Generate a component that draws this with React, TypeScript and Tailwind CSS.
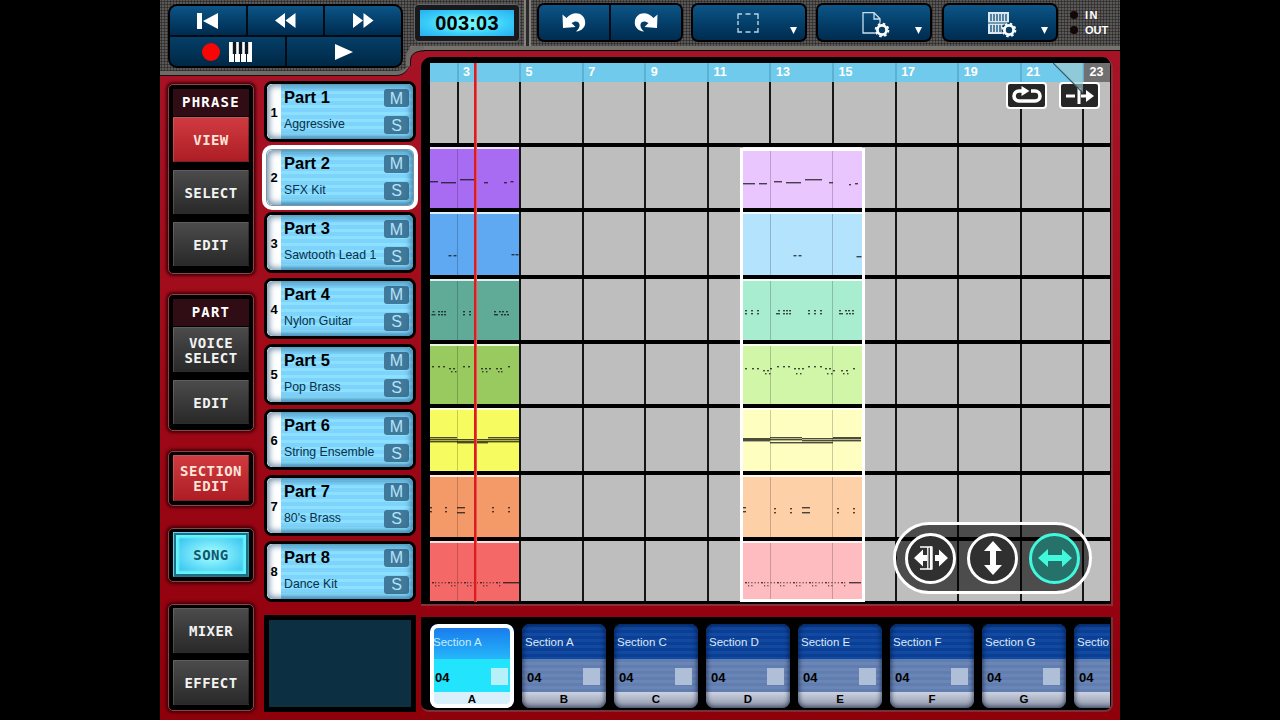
import React from "react";

type Note = [x: number, y: number, w: number, h?: number];

interface Track {
  name: string;
  voice: string;
  height: string;
  left: { color: string; notes: Note[] };
  right: { color: string; notes: Note[] };
}

const dots = (y: number, xs: number[], w = 2): Note[] => xs.map((x) => [x, y, w]);

// hi-hat style pattern used by the drum part
const drumPattern = (length: number, y: number): Note[] =>
  Array.from({ length: Math.floor(length / 3.2) }).flatMap((_, i): Note[] => {
    const x = 2 + i * 3.2;
    return i % 5 === 1 || i % 5 === 2 ? [[x, y, 1], [x, y + 3, 1]] : [[x, y, i % 5 === 0 ? 2 : 1]];
  });

const TRACKS: Track[] = [
  {
    name: "Part 1",
    voice: "Aggressive",
    height: "h-[65px]",
    left: { color: "", notes: [] },
    right: { color: "", notes: [] },
  },
  {
    name: "Part 2",
    voice: "SFX Kit",
    height: "h-[65px]",
    left: {
      color: "bg-[#a86cf2]",
      notes: [[0, 34, 8], [11, 35, 15], [30, 32, 17], [54, 35, 4], [74, 35, 3], [80.5, 34, 3]],
    },
    right: {
      color: "bg-[#eac6fe]",
      notes: [[0, 36, 12], [16, 36, 8], [31, 34, 8], [43, 35, 15], [62, 32, 17], [86, 35, 4], [106, 37, 2], [112, 36, 3]],
    },
  },
  {
    name: "Part 3",
    voice: "Sawtooth Lead 1",
    height: "h-[67px]",
    left: { color: "bg-[#5fa8f2]", notes: [...dots(43, [18.5, 23.5], 3), ...dots(42, [81.5, 85.5], 3)] },
    right: { color: "bg-[#b4e3fe]", notes: [...dots(43, [50.5, 55.5], 3), [113.5, 44, 5]] },
  },
  {
    name: "Part 4",
    voice: "Nylon Guitar",
    height: "h-[65px]",
    left: {
      color: "bg-[#5fab98]",
      notes: [
        ...dots(32, [2.5, 8, 11, 14, 33, 39, 64, 69, 72, 76]),
        ...dots(35, [1.5, 3.5, 8, 11, 14, 33, 39, 64, 66, 71, 74, 77]),
      ],
    },
    right: {
      color: "bg-[#a9edd0]",
      notes: [
        ...dots(31, [2, 8, 14, 35, 40, 43, 46, 65, 71, 77, 96, 102, 105, 109]),
        ...dots(34, [2, 8, 14, 33, 35, 40, 43, 46, 65, 71, 77, 96, 98, 103, 106, 109]),
      ],
    },
  },
  {
    name: "Part 5",
    voice: "Pop Brass",
    height: "h-[64px]",
    left: {
      color: "bg-[#98ca60]",
      notes: [
        ...dots(22, [2, 8, 13, 33, 38, 78]),
        ...dots(24, [19, 23, 51, 55, 59, 66, 70]),
        ...dots(27, [21, 25, 52, 56, 68, 71], 1.5),
      ],
    },
    right: {
      color: "bg-[#d2f6a8]",
      notes: [
        ...dots(22, [34, 40, 45, 65, 71, 77]),
        ...dots(24, [2, 9, 14, 27, 51, 55, 59, 82, 86, 110]),
        ...dots(26, [20, 24, 90, 98, 103]),
        ...dots(29, [22, 26, 53, 57, 84, 88, 100, 104], 1.5),
      ],
    },
  },
  {
    name: "Part 6",
    voice: "String Ensemble",
    height: "h-[67px]",
    left: {
      color: "bg-[#f6fc60]",
      notes: [[0, 29, 27], [0, 31, 27], [0, 33, 27], [27, 31, 31], [27, 33, 31], [27, 34, 31], [58, 29, 31], [58, 31, 31], [58, 33, 31]],
    },
    right: {
      color: "bg-[#fefec0]",
      notes: [[0, 30, 27, 3], [27, 29, 32], [27, 31, 32], [27, 34, 32], [59, 30, 31], [59, 32, 31], [59, 34, 31], [90, 29, 28, 2], [90, 32, 28]],
    },
  },
  {
    name: "Part 7",
    voice: "80's Brass",
    height: "h-[66px]",
    left: {
      color: "bg-[#f49a68]",
      notes: [...dots(32, [0, 15, 62, 78]), ...dots(36, [0, 15, 62, 78]), [27, 32, 8], [27, 37, 8]],
    },
    right: {
      color: "bg-[#fed0a8]",
      notes: [...dots(33, [31, 47, 94, 110]), ...dots(37, [31, 47, 94, 110]), [0, 32, 3], [0, 36, 3], [59, 32, 8], [59, 37, 8]],
    },
  },
  {
    name: "Part 8",
    voice: "Dance Kit",
    height: "h-[61px]",
    left: { color: "bg-[#f46868]", notes: [...drumPattern(72, 41), [73, 41, 16]] },
    right: { color: "bg-[#febcc0]", notes: [...drumPattern(104, 41), [106, 41, 12]] },
  },
];

const BARS = [3, 5, 7, 9, 11, 13, 15, 17, 19, 21];

const SECTIONS = [
  { title: "Section A", key: "A" },
  { title: "Section A", key: "B" },
  { title: "Section C", key: "C" },
  { title: "Section D", key: "D" },
  { title: "Section E", key: "E" },
  { title: "Section F", key: "F" },
  { title: "Section G", key: "G" },
  { title: "Sectio", key: "" },
];

const blueButton = "flex items-center justify-center bg-linear-to-b from-[#0d5587] to-[#002c50]";
const metal =
  "bg-[#5a5856] bg-[radial-gradient(circle,#2b2a29_40%,transparent_60%)] bg-[length:3px_3px]";

const Caret = () => (
  <svg width="7" height="7" viewBox="0 0 8 8" className="absolute right-[8px] bottom-[6px]">
    <path d="M0 0h8L4 8z" fill="#fff" />
  </svg>
);

const Gear = ({ className }: { className: string }) => (
  <svg width="16" height="16" viewBox="0 0 16 16" className={className}>
    <circle cx="8" cy="8" r="7.6" fill="#084067" />
    <circle cx="8" cy="8" r="4.6" fill="none" stroke="#fff" strokeWidth="2.8" />
    <circle cx="8" cy="8" r="6.4" fill="none" stroke="#fff" strokeWidth="1.8" strokeDasharray="2.5 2.53" />
  </svg>
);

const UndoIcon = ({ flip }: { flip?: boolean }) => (
  <svg width="24" height="20" viewBox="0 0 24 20" className={flip ? "-scale-x-100" : ""}>
    <path
      d="M.5 1.500L1 15l12.500-1-4-4C13 7.500 17 8 17.500 11.500c.3 2.500-1 5-3.500 7 6-.5 9.300-4.500 9.200-9C23-.5 11-3 4.500 5z"
      fill="#fff"
    />
  </svg>
);

const Header = () => (
  <header className={`relative z-10 flex h-[51px] items-start border-b border-black ${metal}`}>
    {/* Transport deck, drops below the rest of the bar */}
    <div className={`h-[75px] w-[250px] shrink-0 rounded-br-[14px] border-b-4 border-[#6f6c68] pt-1 pl-2 shadow-[0_1px_0_0_#181010] ${metal}`}>
      <div className="flex h-[64px] w-[235px] flex-col gap-[2px] overflow-hidden rounded-[9px] border-2 border-black bg-[#020b14]">
        <div className="grid flex-1 grid-cols-3 gap-[2px]">
          <button className={blueButton}>
            <svg width="21" height="16" viewBox="0 0 21 16" fill="#fff">
              <path d="M0 0h5v16H0zM21 0v16L6 8z" />
            </svg>
          </button>
          <button className={blueButton}>
            <svg width="21" height="15" viewBox="0 0 21 15" fill="#fff">
              <path d="M10 0v15L0 7.500zM20.500 0v15L10.500 7.500z" />
            </svg>
          </button>
          <button className={blueButton}>
            <svg width="21" height="15" viewBox="0 0 21 15" fill="#fff">
              <path d="M0 0l10 7.500L0 15zM10.500 0l10 7.500-10 7.500z" />
            </svg>
          </button>
        </div>
        <div className="grid flex-1 grid-cols-2 gap-[2px]">
          <button className="flex items-center justify-center gap-[9px] bg-linear-to-b from-[#063f68] to-[#002846]">
            <span className="size-[18px] rounded-full bg-[#f80505]" />
            <svg width="23" height="20" viewBox="0 0 23 20">
              <path d="M0 0h23v20H0z" fill="#fff" />
              <path d="M5.500 0v20M11.500 0v20M17.500 0v20" stroke="#0a1620" strokeWidth="1" />
              <path d="M5.500 0v12M11.500 0v12M17.500 0v12" stroke="#0a1620" strokeWidth="3.400" />
            </svg>
          </button>
          <button className="flex items-center justify-center bg-linear-to-b from-[#063f68] to-[#002846]">
            <svg width="18" height="16" viewBox="0 0 18 16">
              <path d="M0 0l18 8-18 8z" fill="#fff" />
            </svg>
          </button>
        </div>
      </div>
    </div>

    <div className="flex h-[50px] flex-1 items-start border-b-4 border-[#76736e]">
      <div className="mt-[5px] ml-[5px] flex h-[36px] w-[104px] shrink-0 items-center justify-center rounded border-[5px] border-[#17191d] bg-[radial-gradient(ellipse,#6ff4fb_20%,#39cdf8_60%,#28aef0)] text-[20px] font-bold tracking-[0.2px] shadow-[0_0_1px_1px_#6b6b6b]">
        003:03
      </div>
      <div className="ml-[5px] h-[46px] w-[7px] shrink-0 border-x-2 border-[#85827e] bg-[#2a2928]" />
      <div className="mt-[3px] ml-[6px] grid h-[39px] w-[146px] shrink-0 grid-cols-2 gap-[2px] overflow-hidden rounded-[7px] border-2 border-black bg-[#020b14]">
        <button className={blueButton}><UndoIcon /></button>
        <button className={blueButton}><UndoIcon flip /></button>
      </div>
      <button className={`relative mt-[3px] ml-[8px] h-[39px] w-[116px] shrink-0 rounded-[7px] border-2 border-black ${blueButton}`}>
        <svg width="22" height="20" viewBox="0 0 22 20" className="mr-[2px]">
          <path
            d="M1 6V1h4M8.500 1h5M17 1h4v5M21 8v4M21 15v4h-4M13.500 19h-5M5 19H1v-4M1 12V8"
            fill="none"
            stroke="#b9d3e2"
            strokeWidth="1.400"
          />
        </svg>
        <Caret />
      </button>
      <button className={`relative mt-[3px] ml-[9px] h-[39px] w-[116px] shrink-0 rounded-[7px] border-2 border-black ${blueButton}`}>
        <svg width="22" height="22" viewBox="0 0 22 22" className="mr-[4px]">
          <path d="M2 .7h11l6 6V21H2zM13 .7V7h6" fill="none" stroke="#c9dfec" strokeWidth="1.300" />
        </svg>
        <Gear className="absolute top-[17px] left-[56px]" />
        <Caret />
      </button>
      <button className={`relative mt-[3px] ml-[10px] h-[39px] w-[116px] shrink-0 rounded-[7px] border-2 border-black ${blueButton}`}>
        <svg width="22" height="22" viewBox="0 0 22 22" className="mr-[3px]">
          <path d="M0 0h21v22H0z" fill="#dbe8ef" />
          <path d="M3 2v7M6 2v7M9 2v7M12 2v7M15 2v7M18 2v7M3 13v7M6 13v7M9 13v7M12 13v7M15 13v7M18 13v7" stroke="#0b4a76" strokeWidth="1.300" />
          <path d="M0 11h21" stroke="#0b4a76" strokeWidth="1" />
        </svg>
        <Gear className="absolute top-[17px] left-[57px]" />
        <Caret />
      </button>
      <div className="mt-[8px] ml-[12px] flex shrink-0 flex-col gap-[1px] text-[11px] leading-[14px] font-bold text-white">
        <div className="flex items-center gap-[7px]">
          <span className="size-[8px] rounded-full bg-[#120808]" />
          <span className="tracking-[1.5px]">IN</span>
        </div>
        <div className="flex items-center gap-[7px]">
          <span className="size-[8px] rounded-full bg-[#120808]" />
          <span>OUT</span>
        </div>
      </div>
    </div>

    {/* Inner fillet where the deck meets the bar */}
    <svg width="20" height="20" viewBox="0 0 20 20" className="absolute top-[46px] left-[244px]">
      <path d="M20 0H12C5 1 2 6 2 12v8h4v-4C6 9 10 4.500 20 4.500z" fill="#6f6c68" />
      <path d="M20 5C10 5 6.500 9 6.500 16v4" fill="none" stroke="#181010" />
    </svg>
  </header>
);

const PanelButton = ({ children, className }: { children: React.ReactNode; className: string }) => (
  <button
    className={`flex w-full items-center justify-center border border-t-white/25 border-r-black/30 border-b-black/40 border-l-white/15 pt-[2px] text-center text-[14px] leading-[15px] font-bold tracking-[0.4px] whitespace-pre-line [font-family:'DejaVu_Sans_Mono',monospace] ${className}`}
  >
    {children}
  </button>
);

const dark = "bg-linear-to-b from-[#4b4b4b] to-[#292929] text-[#f3f3f3]";
const red = "bg-linear-to-b from-[#cf3a40] to-[#ae1d25] text-[#ffe4d8]";

const PanelTitle = ({ children }: { children: React.ReactNode }) => (
  <div className="flex h-[27px] items-center justify-center bg-[#300c14] text-[14px] font-bold tracking-[1.2px] text-white [font-family:'DejaVu_Sans_Mono',monospace]">
    {children}
  </div>
);

const panel =
  "flex w-[86px] flex-col rounded-[5px] border border-[#85474a] bg-black p-[4px] shadow-[0_0_3px_2px_#4a0008]";

const SideMenu = () => (
  <nav className="ml-[8px] w-[86px] shrink-0 pt-[33px]">
    <div className={`${panel} h-[190px]`}>
      <PanelTitle>PHRASE</PanelTitle>
      <PanelButton className={`mt-px h-[45px] ${red}`}>VIEW</PanelButton>
      <PanelButton className={`mt-[8px] h-[44px] ${dark}`}>SELECT</PanelButton>
      <PanelButton className={`mt-[8px] h-[44px] ${dark}`}>EDIT</PanelButton>
    </div>
    <div className={`${panel} mt-[20px] h-[137px]`}>
      <PanelTitle>PART</PanelTitle>
      <PanelButton className={`mt-px h-[45px] ${dark}`}>{"VOICE\nSELECT"}</PanelButton>
      <PanelButton className={`mt-[8px] h-[44px] ${dark}`}>EDIT</PanelButton>
    </div>
    <div className={`${panel} mt-[20px] h-[55px] pt-[3px]`}>
      <PanelButton className={`h-[46px] ${red}`}>{"SECTION\nEDIT"}</PanelButton>
    </div>
    <div className={`${panel} mt-[22px] h-[54px] pt-[3px]`}>
      <PanelButton className="h-[47px] bg-[radial-gradient(ellipse,#8cf2fc_20%,#38c4f2_80%)] text-[#12566c] shadow-[inset_0_0_0_2px_#1c6f84,inset_0_0_2px_5px_#64f4f8]">
        SONG
      </PanelButton>
    </div>
    <div className={`${panel} mt-[22px] h-[107px] pt-[3px]`}>
      <PanelButton className={`h-[45px] ${dark}`}>MIXER</PanelButton>
      <PanelButton className={`mt-[7px] h-[45px] ${dark}`}>EFFECT</PanelButton>
    </div>
  </nav>
);

const MuteSolo = ({ label }: { label: string }) => (
  <button className="flex h-[18px] w-[25px] items-center justify-center rounded-[3px] bg-[#40799a] pt-px text-[16px] leading-none text-[#b4e4fa]">
    {label}
  </button>
);

const PartRow = ({ track, index }: { track: Track; index: number }) => {
  const selected = index === 1;
  return (
    <div className="h-[65.67px]">
      <div
        className={`relative flex h-[61px] w-[152px] overflow-hidden rounded-[8px] border-[3px] bg-[#7fd4fc] bg-[repeating-linear-gradient(#96ecff88_0_3px,#79cdfa22_3px_7px)] ${
          selected ? "border-[#7d97a8] outline-[4px] -outline-offset-2 outline-white" : "border-black"
        }`}
      >
        <div className="flex w-[14px] shrink-0 items-center justify-center bg-white pt-[2px] text-[13px] font-bold">{index + 1}</div>
        <div className="flex-1 pl-[3px] whitespace-nowrap">
          <div className="mt-[4px] text-[16.5px] leading-[18px] font-bold">{track.name}</div>
          <div className="mt-[11px] text-[12.3px] leading-[14px] text-[#083048]">{track.voice}</div>
        </div>
        <div className="absolute top-[5px] right-[4px] flex flex-col gap-[9px]">
          <MuteSolo label="M" />
          <MuteSolo label="S" />
        </div>
        <div className="pointer-events-none absolute inset-0 rounded-[6px] shadow-[inset_0_0_6px_2px_#0a3f6a99]" />
      </div>
    </div>
  );
};

const Clip = ({ color, notes, className }: { color: string; notes: Note[]; className: string }) => (
  <div className={`absolute top-0 bottom-0 overflow-hidden border-t-2 border-white/80 ${color} ${className}`}>
    <svg width="120" height="60" className="absolute -top-[2px] left-0 opacity-75">
      {notes.map(([x, y, w, h = 1], i) => (
        <rect key={i} x={x} y={y} width={w} height={h + 0.4} fill="#111" />
      ))}
    </svg>
  </div>
);

const GridButton = ({ children, className }: { children: React.ReactNode; className: string }) => (
  <button className={`absolute top-[19px] flex h-[27px] w-[41px] items-center justify-center rounded-[4px] border-2 border-white bg-[#262626] ${className}`}>
    {children}
  </button>
);

const ModeButton = ({ children, active }: { children: React.ReactNode; active?: boolean }) => (
  <button
    className={`flex size-[51px] items-center justify-center rounded-full border-[3px] ${
      active ? "border-[#40f8dc] bg-[#26716a]" : "border-white bg-[#303030]"
    }`}
  >
    {children}
  </button>
);

const Arranger = () => (
  <section className="mt-[6px] h-[549px] w-[692px] rounded-t-[10px] border-r-2 border-b-2 border-[#8a3038] bg-black pt-[6px] pl-[9px]">
    <div className="relative w-[680px] overflow-hidden">
      {/* Ruler */}
      <div className="flex h-[19px] bg-[#70caec] text-[12.5px] leading-[19px] font-bold text-white">
        <div className="w-[28.5px] shrink-0 border-r-2 border-[#5cb0d2]" />
        {BARS.map((bar) => (
          <div key={bar} className="w-[62.6px] shrink-0 border-r-2 border-[#5cb0d2] pl-[4.500px]">
            {bar}
          </div>
        ))}
        <div className="flex-1 bg-[#707070] pl-[5px]">23</div>
      </div>

      {TRACKS.map((track, i) => (
        <div key={track.name} className={`relative ${track.height} ${i < 7 ? "border-b-4 border-black" : "border-b border-black"}`}>
          <div className="flex h-full overflow-hidden bg-[#bebebe]">
            <div className="w-[28.5px] shrink-0 border-r-2 border-[#161616]" />
            {BARS.map((bar) => (
              <div key={bar} className="w-[62.6px] shrink-0 border-r-2 border-[#161616]" />
            ))}
          </div>
          {i > 0 && (
            <>
              <Clip {...track.left} className="left-0 w-[89px]" />
              <Clip {...track.right} className="left-[313px] w-[119px]" />
              <div className="absolute top-[2px] bottom-0 left-[27px] w-px bg-black/20" />
              <div className="absolute top-[2px] bottom-0 left-[340px] w-px bg-black/20" />
              <div className="absolute top-[2px] bottom-0 left-[402px] w-px bg-black/20" />
            </>
          )}
        </div>
      ))}

      {/* Selected range */}
      <div className="absolute top-[85px] bottom-0 left-[310px] w-[125px] border-[3px] border-white" />

      {/* Playhead */}
      <div className="absolute top-0 bottom-0 left-[44px] w-[3px] border-r border-r-[#f4808088] bg-[#dc1c20]" />

      {/* Song end marker */}
      <GridButton className="left-[576px]">
        <svg width="32" height="20" viewBox="0 0 32 20">
          <path d="M11 5H8a5 5 0 0 0 0 10h16a5 5 0 0 0 0-10h-4" fill="none" stroke="#fff" strokeWidth="3.600" />
          <path d="M10.500 0l8 5-8 5z" fill="#fff" />
        </svg>
      </GridButton>
      <GridButton className="left-[629px]">
        <svg width="30" height="18" viewBox="0 0 30 18">
          <path d="M1 9h9M14 1v16M16 9h6" fill="none" stroke="#fff" strokeWidth="3" />
          <path d="M21 3l8 6-8 6z" fill="#fff" />
        </svg>
      </GridButton>
      <svg width="31" height="31" viewBox="0 0 31 31" className="absolute top-0 left-[623px]">
        <path d="M0 0h30v30z" fill="#9fc9d0" fillOpacity=".65" />
        <path d="M0 0l30 30" stroke="#345a66" strokeWidth="1.200" />
      </svg>

      {/* Drag mode palette */}
      <div className="absolute bottom-[8px] left-[463px] flex h-[72px] w-[199px] items-center justify-center gap-[11px] rounded-full border-[3px] border-white bg-black/60">
        <ModeButton>
          <svg width="34" height="26" viewBox="0 0 34 26" className="shrink-0" fill="#fff">
            <path d="M0 13l9-8.500v5.500h4v6H9v5.500zM34 13l-9-8.500v5.500h-4v6h4v5.500z" />
            <path d="M6 2h12M6 24h12M13.800 2v22" fill="none" stroke="#fff" strokeWidth="1.300" />
            <path d="M17.300 1.500v23" fill="none" stroke="#fff" strokeWidth="2.800" />
          </svg>
        </ModeButton>
        <ModeButton>
          <svg width="20" height="34" viewBox="0 0 20 34" fill="#fff">
            <path d="M10 0l9 10h-6v14h6l-9 10-9-10h6V10H1z" />
          </svg>
        </ModeButton>
        <ModeButton active>
          <svg width="34" height="20" viewBox="0 0 34 20" fill="#40f8dc">
            <path d="M0 10l10-9v6h14V1l10 9-10 9v-6H10v6z" />
          </svg>
        </ModeButton>
      </div>
    </div>
  </section>
);

const SectionCard = ({ title, letter, selected }: { title: string; letter: string; selected: boolean }) => (
  <div className="relative flex h-[84px] w-[84px] shrink-0 flex-col overflow-hidden rounded-[8px]">
    <div
      className={`h-[35px] pt-[11px] pl-[3px] text-[11.5px] leading-[14px] whitespace-nowrap ${
        selected
          ? "bg-linear-to-b from-[#1c74ea] to-[#28b6fa] text-[#c8ecff]"
          : "bg-[#0c459c] bg-[repeating-linear-gradient(#0c3f94_0_3px,#104aa2_3px_6px)] text-[#dce8fa]"
      }`}
    >
      {title}
    </div>
    <div
      className={`flex h-[33px] items-center justify-between pt-[2px] pr-[6px] pl-[5px] ${
        selected ? "bg-[#22e4fc]" : "bg-[#6682b4] bg-[repeating-linear-gradient(#617eb0_0_3px,#6b86b6_3px_6px)]"
      }`}
    >
      <span className="pt-[3px] text-[13px] font-bold">04</span>
      <span className={`size-[17px] ${selected ? "bg-[#b8f0fa]" : "bg-[#b0bfd8]"}`} />
    </div>
    <div
      className={`h-[16px] text-center text-[11.5px] leading-[15px] font-bold ${
        selected ? "bg-[#d8effc]" : "bg-linear-to-b from-[#ccd2e0] to-[#8c94a8]"
      }`}
    >
      {letter}
    </div>
    <div
      className={`pointer-events-none absolute inset-0 rounded-[8px] ${
        selected ? "border-4 border-white" : "shadow-[inset_0_0_5px_1px_#001030aa]"
      }`}
    />
  </div>
);

export default function App() {
  return (
    <div className="flex h-[720px] w-[1280px] justify-center overflow-hidden bg-black font-['Liberation_Sans',Arial,sans-serif]">
      <div className="h-[720px] w-[960px] overflow-hidden bg-linear-to-b from-[#a81428] via-[#a00a18] to-[#8e000a]">
        <Header />
        <main className="flex h-[669px]">
          <SideMenu />
          <div className="ml-[10px] w-[152px] shrink-0 pt-[30px]">
            {TRACKS.map((track, i) => (
              <PartRow key={track.name} track={track} index={i} />
            ))}
            <div className="mt-[9px] h-[97px] border-[5px] border-black bg-[#0c2f42]" />
          </div>
          <div className="ml-[5px]">
            <Arranger />
            <div className="mt-[11px] flex h-[95px] w-[692px] rounded-b-[8px] border-r-2 border-b-2 border-[#7a3038] bg-black pt-[7px] pl-[9px]">
              <div className="flex w-[680px] gap-[8px] overflow-hidden">
                {SECTIONS.map((s, i) => (
                  <SectionCard key={i} title={s.title} letter={s.key} selected={i === 0} />
                ))}
              </div>
            </div>
          </div>
        </main>
      </div>
    </div>
  );
}
